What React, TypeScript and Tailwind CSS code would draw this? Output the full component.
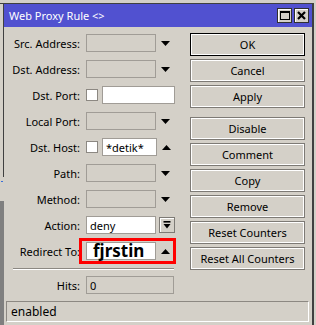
import React from "react";

const Down = () => (
  <svg width="9" height="5" viewBox="0 0 9 5" className="ml-[5px] shrink-0">
    <polygon points="0,0 9,0 4.5,5" fill="#000" />
  </svg>
);

const Up = () => (
  <svg width="9" height="5" viewBox="0 0 9 5" className="ml-[5px] shrink-0">
    <polygon points="0,5 9,5 4.5,0" fill="#000" />
  </svg>
);

const Label = ({ text }: { text: string }) => (
  <div className="w-[77px] shrink-0 pr-[1px] text-right whitespace-nowrap">{text}</div>
);

const GrayBox = ({ className, children }: { className: string; children?: React.ReactNode }) => (
  <div
    className={
      "flex h-[18px] items-center border border-[#a09c96] bg-[#d4d0c8] pl-[3px] " + className
    }
  >
    {children}
  </div>
);

const WhiteBox = ({ className, children }: { className: string; children?: React.ReactNode }) => (
  <div
    className={"flex h-[18px] items-center border border-[#a09c96] bg-white " + className}
  >
    {children}
  </div>
);

const Check = () => (
  <div className="mr-[4px] h-[12px] w-[12px] shrink-0 border border-[#8c8882] bg-white" />
);

const Row = ({ label, children }: { label: string; children: React.ReactNode }) => (
  <div className="flex h-[18px] items-center">
    <Label text={label} />
    <div className="ml-[5px] flex items-center">{children}</div>
  </div>
);

const Btn = ({ label, primary = false, className = "" }: { label: string; primary?: boolean; className?: string }) => (
  <div
    className={
      (primary ? "border-black " : "border-[#7d7a75] ") +
      "flex h-[23px] items-center justify-center border bg-[#d4d0c8] shadow-[inset_0_0_0_1px_#fff] " +
      className
    }
  >
    {label}
  </div>
);

export default function App() {
  return (
    <div className="flex h-[325px] w-[316px] overflow-hidden bg-[#d4d0c8] font-['Noto_Sans',sans-serif] text-[11px] leading-none text-black">
      {/* window behind, left edge */}
      <div className="flex w-[4px] shrink-0 flex-col">
        <div className="h-[3px]" />
        <div className="h-[174px] border-t border-r border-[#404040]" />
        <div className="relative h-[24px]">
          <div className="absolute top-[4px] left-[1px] h-[1px] w-[2px] bg-[#3a6fd8]" />
        </div>
        <div className="flex-1 bg-[#7f7f7f]" />
      </div>

      {/* dialog */}
      <div className="mt-[3px] flex w-[310px] shrink-0 flex-col border-t border-r-2 border-[#404040]">
        <div className="flex h-[23px] items-center bg-[#5151d0] pr-[3px] pl-[5px]">
          <span className="text-white">Web Proxy Rule &lt;&gt;</span>
          <div className="ml-auto flex gap-[2px]">
            <div className="flex h-[15px] w-[15px] items-center justify-center border border-[#303030] bg-[#d4d0c8] shadow-[inset_1px_1px_0_#fff]">
              <div className="h-[9px] w-[10px] border border-t-2 border-black" />
            </div>
            <div className="flex h-[15px] w-[15px] items-center justify-center border border-[#303030] bg-[#d4d0c8] shadow-[inset_1px_1px_0_#fff]">
              <svg width="9" height="9" viewBox="0 0 9 9">
                <path d="M1 1 L8 8 M8 1 L1 8" stroke="#000" strokeWidth="2.2" />
              </svg>
            </div>
          </div>
        </div>

        <div className="flex">
          {/* fields */}
          <div className="flex w-[186px] shrink-0 flex-col pt-[7px]">
            <div className="flex flex-col gap-[8px]">
              <Row label="Src. Address:">
                <GrayBox className="w-[70px]" />
                <Down />
              </Row>
              <Row label="Dst. Address:">
                <GrayBox className="w-[70px]" />
                <Down />
              </Row>
              <Row label="Dst. Port:">
                <Check />
                <WhiteBox className="w-[73px]" />
              </Row>
              <Row label="Local Port:">
                <GrayBox className="w-[70px]" />
                <Down />
              </Row>
              <Row label="Dst. Host:">
                <Check />
                <WhiteBox className="w-[55px] pl-[3px]">*detik*</WhiteBox>
                <Up />
              </Row>
              <Row label="Path:">
                <GrayBox className="w-[70px]" />
                <Down />
              </Row>
              <Row label="Method:">
                <GrayBox className="w-[70px]" />
                <Down />
              </Row>
              <Row label="Action:">
                <WhiteBox className="w-[70px] pl-[3px]">deny</WhiteBox>
                <div className="ml-[3px] flex h-[16px] w-[16px] items-center justify-center border border-[#7d7a75] bg-[#d4d0c8] shadow-[inset_1px_1px_0_#fff]">
                  <svg width="8" height="8" viewBox="0 0 8 8">
                    <rect x="0.5" y="0" width="7" height="1.6" fill="#000" />
                    <polygon points="0.5,3 7.5,3 4,7.5" fill="#000" />
                  </svg>
                </div>
              </Row>
              <div className="relative">
                <Row label="Redirect To:">
                  <WhiteBox className="w-[70px] pl-[6px] text-[17px] font-bold">
                    <span className="leading-[18px]">fjrstin</span>
                  </WhiteBox>
                  <Up />
                </Row>
                <div className="absolute top-[-4px] left-[75px] h-[26px] w-[97px] border-[3px] border-[#f00]" />
              </div>
            </div>
            <div className="mt-[8px] ml-[9px] w-[161px] border-t border-b border-t-[#8c8882] border-b-white" />
            <div className="mt-[6px]">
              <Row label="Hits:">
                <GrayBox className="w-[88px]">0</GrayBox>
              </Row>
            </div>
          </div>

          {/* buttons */}
          <div className="flex w-[115px] shrink-0 flex-col gap-[3px] pt-[6px]">
            <Btn label="OK" primary />
            <Btn label="Cancel" />
            <Btn label="Apply" />
            <Btn label="Disable" className="mt-[6px]" />
            <Btn label="Comment" />
            <Btn label="Copy" />
            <Btn label="Remove" />
            <Btn label="Reset Counters" />
            <Btn label="Reset All Counters" />
          </div>
        </div>

        <div className="mt-[7px] ml-[2px] flex h-[21px] w-[303px] items-center border border-t-[#8c8882] border-l-[#8c8882] border-r-white border-b-white pl-[4px] text-[12px]">
          enabled
        </div>
      </div>
    </div>
  );
}
